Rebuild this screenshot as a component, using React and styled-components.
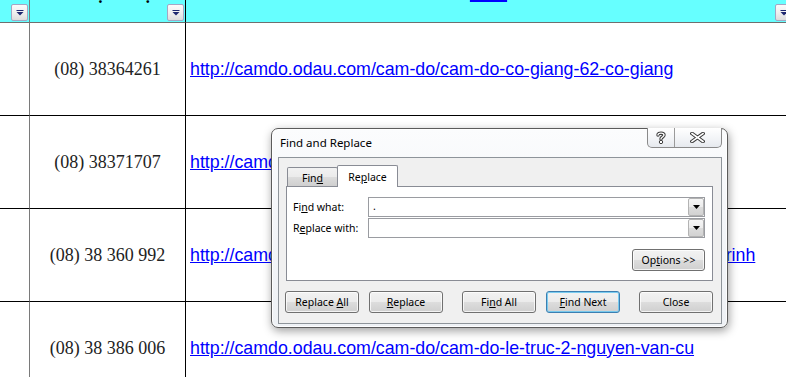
import React from "react";
import styled, { createGlobalStyle } from "styled-components";

const GlobalStyle = createGlobalStyle`
  html, body {
    margin: 0;
    padding: 0;
    background: #fff;
    overflow: hidden;
  }
`;

const rows = [
  { phone: "(08) 38364261", link: "http://camdo.odau.com/cam-do/cam-do-co-giang-62-co-giang" },
  { phone: "(08) 38371707", link: "http://camdo.odau.com/cam-do/cam-do-cong-quynh-162" },
  { phone: "(08) 38 360 992", link: "http://camdo.odau.com/cam-do/cam-do-tran-dinh-xu-68-nguyen-cu-trinh" },
  { phone: "(08) 38 386 006", link: "http://camdo.odau.com/cam-do/cam-do-le-truc-2-nguyen-van-cu" },
];

const Sheet = styled.div`
  position: relative;
  width: 786px;
  height: 377px;
  overflow: hidden;
  background: #fff;
`;

const Grid = styled.div`
  display: grid;
  grid-template-columns: 30px 156px 606px;
  grid-template-rows: 23px repeat(4, 93px);
`;

const HeadCell = styled.div`
  position: relative;
  background: #66ffff;
  border-bottom: 1px solid #6f6f6f;
  border-right: 1px solid ${({ $dark }) => ($dark ? "#000" : "#7a7a7a")};
  display: flex;
  justify-content: center;
  align-items: flex-start;
  overflow: hidden;
`;

const HeadLabel = styled.span`
  margin-top: -16px;
  line-height: 18px;
  font-size: ${({ $link }) => ($link ? "17.8px" : "18px")};
  font-weight: bold;
  font-family: ${({ $link }) =>
    $link ? '"Liberation Sans", Arial, sans-serif' : '"Liberation Serif", "Times New Roman", serif'};
  color: ${({ $link }) => ($link ? "#0000ff" : "#000")};
  text-decoration: ${({ $link }) => ($link ? "underline" : "none")};
  text-decoration-thickness: 2px;
  white-space: nowrap;
`;

const FilterButton = styled.div`
  position: absolute;
  top: 4px;
  right: ${({ $right }) => $right}px;
  width: 17px;
  height: 17px;
  box-sizing: border-box;
  border: 1px solid #a4a6c4;
  border-radius: 2px;
  background: linear-gradient(180deg, #fbfbfb 0%, #eeeeee 55%, #dcdcdc 100%);
  display: flex;
  align-items: center;
  justify-content: center;
`;

const Cell = styled.div`
  border-bottom: 1px solid #000;
  border-right: 1px solid ${({ $dark }) => ($dark ? "#000" : "#7a7a7a")};
  display: flex;
  align-items: center;
  justify-content: ${({ $center }) => ($center ? "center" : "flex-start")};
  overflow: visible;
  min-width: 0;
`;

const Phone = styled.span`
  font-family: "Liberation Serif", "Times New Roman", serif;
  font-size: 18px;
  color: #222;
  white-space: nowrap;
`;

const Link = styled.a`
  margin-left: 4px;
  font-family: "Liberation Sans", Arial, sans-serif;
  font-size: 17.8px;
  color: #0000ff;
  text-decoration: underline;
  white-space: nowrap;
`;

/* ---------- dialog ---------- */

const Dialog = styled.div`
  position: absolute;
  left: 271px;
  top: 128px;
  width: 457px;
  height: 200px;
  box-sizing: border-box;
  border: 1px solid #5b5b5b;
  border-radius: 7px;
  background: linear-gradient(180deg, #fbfcfd 0%, #f4f6f9 45%, #eef1f5 100%);
  box-shadow: inset 0 0 0 1px rgba(255, 255, 255, 0.85), 1px 3px 10px rgba(0, 0, 0, 0.38);
  display: flex;
  flex-direction: column;
  font-family: "Noto Sans", "Open Sans", sans-serif;
  font-size: 10.5px;
  color: #000;
`;

const TitleBar = styled.div`
  height: 28px;
  display: flex;
  align-items: center;
  padding-left: 8px;
  padding-bottom: 1px;
  box-sizing: border-box;
  font-size: 11.5px;
`;

const CaptionButtons = styled.div`
  position: absolute;
  top: -1px;
  right: 5px;
  width: 75px;
  height: 20px;
  box-sizing: border-box;
  border: 1px solid #8a8a8a;
  border-top: none;
  border-radius: 0 0 5px 5px;
  background: linear-gradient(180deg, #ffffff 0%, #f1f3f6 60%, #e6e9ee 100%);
  display: flex;
  overflow: hidden;
`;

const CaptionButton = styled.div`
  width: ${({ $w }) => $w}px;
  display: flex;
  align-items: center;
  justify-content: center;
  border-right: ${({ $divider }) => ($divider ? "1px solid #9a9a9a" : "none")};
`;

const Content = styled.div`
  flex: 1;
  margin: 0 5px 3px 6px;
  border: 1px solid #8e949a;
  background: #f0f0f0;
  padding: 7px 8px 0 7px;
  display: flex;
  flex-direction: column;
`;

const TabRow = styled.div`
  height: 21px;
  display: flex;
  align-items: flex-end;
  margin-left: 1px;
`;

const Tab = styled.div`
  position: relative;
  z-index: ${({ $active }) => ($active ? 2 : 1)};
  width: ${({ $w }) => $w}px;
  height: ${({ $active }) => ($active ? 22 : 19)}px;
  margin-bottom: ${({ $active }) => ($active ? -1 : 0)}px;
  margin-right: -1px;
  box-sizing: border-box;
  border: 1px solid #898c95;
  border-bottom: none;
  border-radius: 2px 2px 0 0;
  background: ${({ $active }) =>
    $active ? "#ffffff" : "linear-gradient(180deg, #f2f2f2 0%, #ebebeb 50%, #dddddd 51%, #cfcfcf 100%)"};
  display: flex;
  align-items: center;
  justify-content: center;
  padding-top: ${({ $active }) => ($active ? 0 : 1)}px;
`;

const Panel = styled.div`
  position: relative;
  height: 95px;
  box-sizing: border-box;
  border: 1px solid #898c95;
  background: #fff;
  padding: 10px 7px 0 6px;
  display: flex;
  flex-direction: column;
`;

const FieldGrid = styled.div`
  display: grid;
  grid-template-columns: 75px 1fr;
  row-gap: 1px;
  align-items: center;
`;

const Combo = styled.div`
  height: 20px;
  box-sizing: border-box;
  border: 1px solid #9a9ca1;
  background: #fff;
  display: flex;
`;

const ComboText = styled.div`
  flex: 1;
  padding-left: 4px;
  line-height: 17px;
`;

const ComboArrow = styled.div`
  width: 16px;
  box-sizing: border-box;
  border: 1px solid #b3b3b3;
  border-radius: 2px;
  background: linear-gradient(180deg, #f6f6f6 0%, #ececec 50%, #dcdcdc 51%, #d2d2d2 100%);
  display: flex;
  align-items: center;
  justify-content: center;
`;

const Button = styled.div`
  width: ${({ $w }) => $w || 74}px;
  height: 22px;
  margin-left: ${({ $gap }) => $gap || 0}px;
  box-sizing: border-box;
  border: 1px solid ${({ $focus }) => ($focus ? "#3c7fb1" : "#707070")};
  border-radius: 3px;
  background: linear-gradient(180deg, #f2f2f2 0%, #ebebeb 50%, #dddddd 51%, #cfcfcf 100%);
  box-shadow: inset 0 0 0 1px ${({ $focus }) => ($focus ? "rgba(110, 200, 240, 0.9)" : "rgba(255, 255, 255, 0.75)")};
  display: flex;
  align-items: center;
  justify-content: center;
  padding-bottom: 1px;
  white-space: nowrap;
`;

const OptionsButton = styled(Button)`
  align-self: flex-end;
  margin-top: 11px;
`;

const ButtonRow = styled.div`
  display: flex;
  margin: 10px 0 0 -1px;
`;

const Key = styled.span`
  text-decoration: underline;
  text-underline-offset: 1px;
`;

const FilterIcon = () => (
  <svg width="8" height="6" viewBox="0 0 8 6">
    <rect x="0.5" y="0" width="7" height="1" fill="#1f2870" />
    <polygon points="0.5,2 7.5,2 4,5.5" fill="#1f2870" />
  </svg>
);

const DownArrow = () => (
  <svg width="7" height="4" viewBox="0 0 7 4">
    <polygon points="0,0 7,0 3.5,4" fill="#000" />
  </svg>
);

const HelpGlyph = () => (
  <svg width="10" height="13" viewBox="0 0 10 13">
    <path
      d="M2 4 C2 1.5 8 1.5 8 4 C8 6 5 6 5 8"
      fill="none"
      stroke="#3c3c3c"
      strokeWidth="3.4"
      strokeLinecap="round"
    />
    <path
      d="M2 4 C2 1.5 8 1.5 8 4 C8 6 5 6 5 8"
      fill="none"
      stroke="#fff"
      strokeWidth="1.4"
      strokeLinecap="round"
    />
    <circle cx="5" cy="11" r="1.7" fill="#fff" stroke="#3c3c3c" strokeWidth="1" />
  </svg>
);

const CloseGlyph = () => (
  <svg width="15" height="11" viewBox="0 0 15 11">
    <path d="M2 1.5 L13 9.5 M13 1.5 L2 9.5" stroke="#3c3c3c" strokeWidth="3.6" strokeLinecap="square" />
    <path d="M2 1.5 L13 9.5 M13 1.5 L2 9.5" stroke="#fff" strokeWidth="1.6" strokeLinecap="square" />
  </svg>
);

const App = () => {
  return (
    <Sheet>
      <GlobalStyle />
      <Grid>
        <HeadCell>
          <FilterButton $right={1}>
            <FilterIcon />
          </FilterButton>
        </HeadCell>
        <HeadCell $dark>
          <HeadLabel>Số điện thoại</HeadLabel>
          <FilterButton $right={1}>
            <FilterIcon />
          </FilterButton>
        </HeadCell>
        <HeadCell>
          <HeadLabel $link>Web</HeadLabel>
          <FilterButton $right={-1}>
            <FilterIcon />
          </FilterButton>
        </HeadCell>

        {rows.map((row) => (
          <React.Fragment key={row.phone}>
            <Cell />
            <Cell $dark $center>
              <Phone>{row.phone}</Phone>
            </Cell>
            <Cell>
              <Link href="#">{row.link}</Link>
            </Cell>
          </React.Fragment>
        ))}
      </Grid>

      <Dialog>
        <TitleBar>Find and Replace</TitleBar>
        <CaptionButtons>
          <CaptionButton $w={27} $divider>
            <HelpGlyph />
          </CaptionButton>
          <CaptionButton $w={48}>
            <CloseGlyph />
          </CaptionButton>
        </CaptionButtons>

        <Content>
          <TabRow>
            <Tab $w={51}>
              <span>
                Fin<Key>d</Key>
              </span>
            </Tab>
            <Tab $w={61} $active>
              <span>
                Re<Key>p</Key>lace
              </span>
            </Tab>
          </TabRow>

          <Panel>
            <FieldGrid>
              <span>
                Fi<Key>n</Key>d what:
              </span>
              <Combo>
                <ComboText>.</ComboText>
                <ComboArrow>
                  <DownArrow />
                </ComboArrow>
              </Combo>
              <span>
                R<Key>e</Key>place with:
              </span>
              <Combo>
                <ComboText />
                <ComboArrow>
                  <DownArrow />
                </ComboArrow>
              </Combo>
            </FieldGrid>
            <OptionsButton $w={73}>
              <span>
                Op<Key>t</Key>ions &gt;&gt;
              </span>
            </OptionsButton>
          </Panel>

          <ButtonRow>
            <Button>
              <span>
                Replace <Key>A</Key>ll
              </span>
            </Button>
            <Button $gap={10}>
              <span>
                <Key>R</Key>eplace
              </span>
            </Button>
            <Button $gap={19}>
              <span>
                Fi<Key>n</Key>d All
              </span>
            </Button>
            <Button $gap={10} $focus>
              <span>
                <Key>F</Key>ind Next
              </span>
            </Button>
            <Button $gap={19}>Close</Button>
          </ButtonRow>
        </Content>
      </Dialog>
    </Sheet>
  );
};

export default App;
